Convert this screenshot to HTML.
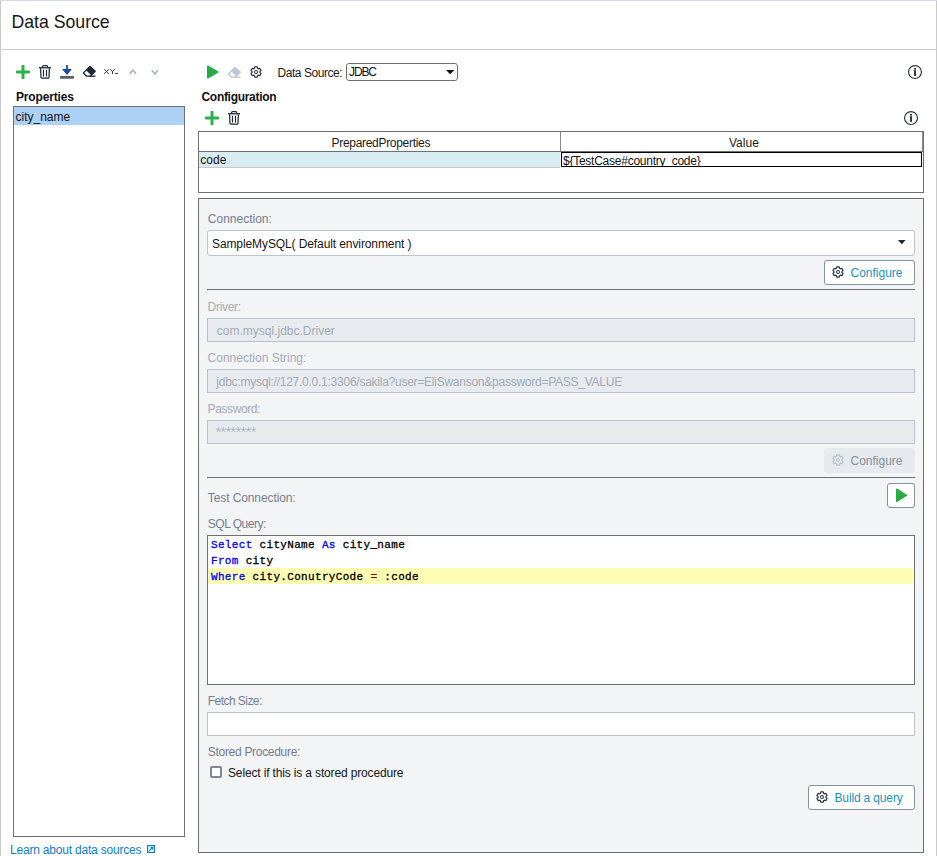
<!DOCTYPE html><html><head><meta charset="utf-8"><style>
html,body{margin:0;padding:0;background:#fff;width:937px;height:856px;overflow:hidden;position:relative}
.t{position:absolute;white-space:pre}
.r{position:absolute;box-sizing:border-box}
</style></head><body>
<div class="r" style="left:0px;top:0px;width:1px;height:856px;background:#c9c9c9"></div>
<div class="r" style="left:936px;top:0px;width:1px;height:856px;background:#c9c9c9"></div>
<div class="r" style="left:0px;top:0px;width:937px;height:1px;background:#d6dce5"></div>
<div class="t" style="left:11.40px;top:13.62px;font-size:17.7px;line-height:17.7px;color:#161616;font-weight:normal;font-family:'Liberation Sans', sans-serif;">Data Source</div>
<div class="r" style="left:1px;top:49px;width:935px;height:1px;background:#cdcdcd"></div>
<svg class="r" style="left:16px;top:65px" width="14" height="14" viewBox="0 0 14 14"><rect x="5.5" y="0" width="3" height="14" rx="0.8" fill="#2bb14b"/><rect x="0" y="5.5" width="14" height="3" rx="0.8" fill="#2bb14b"/></svg>
<svg class="r" style="left:39px;top:65px" width="13" height="14" viewBox="0 0 13 14"><path d="M3.6,2.4 V1.5 Q3.6,0.6 4.5,0.6 H7.7 Q8.6,0.6 8.6,1.5 V2.4" fill="none" stroke="#1f2937" stroke-width="1.2"/><path d="M0,2.75 H12" stroke="#1f2937" stroke-width="1.3"/><path d="M1.6,3.2 L2.0,12.3 Q2.05,13.05 2.8,13.05 H9.2 Q9.95,13.05 10.0,12.3 L10.4,3.2" fill="none" stroke="#1f2937" stroke-width="1.25"/><path d="M4.5,5.1 V10.9 M7.5,5.1 V10.9" stroke="#1f2937" stroke-width="1.15" stroke-linecap="round"/></svg>
<svg class="r" style="left:60px;top:65px" width="14" height="14" viewBox="0 0 14 14"><path d="M6.1,0 H7.9 V4 H11.9 L7,9.9 L2,4 H6.1 Z" fill="#1b4ba1"/><rect x="0" y="11.1" width="14" height="2.6" rx="0.6" fill="#5f5f5f"/></svg>
<svg class="r" style="left:83px;top:66.3px" width="13" height="11" viewBox="0 0 13 11"><path d="M7,0.3 L12.2,5.3 L7.3,10.2 H3.6 L0.3,7 Z" fill="none" stroke="#1e2836" stroke-width="1.3" stroke-linejoin="round"/><path d="M7,0.3 L12.2,5.3 L8.2,9.3 L3.1,4.2 Z" fill="#1e2836"/><path d="M6.5,10.2 H12.5" stroke="#1e2836" stroke-width="1.3"/></svg>
<svg class="r" style="left:103px;top:68px" width="16" height="7" viewBox="0 0 16 7"><path d="M1.3,1.2 L5.8,5.8 M5.8,1.2 L1.3,5.8 M7.2,1.2 L9.5,3.7 L11.8,1.2 M9.5,3.7 V5.9 M12.2,5.4 H15" stroke="#1a1a1a" stroke-width="0.9" fill="none"/></svg>
<svg class="r" style="left:129px;top:69px" width="8" height="6" viewBox="0 0 8 6"><path d="M0.8,4.6 L3.9,1.2 L7,4.6" fill="none" stroke="#aab4c3" stroke-width="1.6"/></svg>
<svg class="r" style="left:151px;top:69px" width="8" height="6" viewBox="0 0 8 6"><path d="M0.8,1.4 L3.9,4.8 L7,1.4" fill="none" stroke="#aab4c3" stroke-width="1.6"/></svg>
<div class="t" style="left:16.00px;top:90.54px;font-size:12px;line-height:12px;color:#111;font-weight:bold;font-family:'Liberation Sans', sans-serif;letter-spacing:-0.15px">Properties</div>
<div class="r" style="left:13px;top:106px;width:172px;height:731px;border:1px solid #6f6f6f;background:#fff"></div>
<div class="r" style="left:14px;top:107px;width:170px;height:18px;background:#add1f5"></div>
<div class="t" style="left:15.50px;top:111.14px;font-size:12px;line-height:12px;color:#141414;font-weight:normal;font-family:'Liberation Sans', sans-serif;">city_name</div>
<div class="t" style="left:10.00px;top:844.14px;font-size:12px;line-height:12px;color:#0d80c6;font-weight:normal;font-family:'Liberation Sans', sans-serif;letter-spacing:-0.2px">Learn about data sources</div>
<svg class="r" style="left:147px;top:845px" width="8" height="8" viewBox="0 0 8 8"><rect x="0.6" y="0.6" width="6.8" height="6.8" fill="none" stroke="#0d80c6" stroke-width="1.2"/><path d="M2.2,5.8 L5.6,2.4 M3.6,2.3 H5.7 V4.4" fill="none" stroke="#0d80c6" stroke-width="1.2"/></svg>
<svg class="r" style="left:205.5px;top:65px" width="13" height="14" viewBox="0 0 13 14"><path d="M1,1.2 Q1,0 2.1,0.6 L12.4,6.4 Q13,7.0 12.4,7.6 L2.1,13.4 Q1,14 1,12.8 Z" fill="#28ab45"/></svg>
<svg class="r" style="left:228px;top:66.5px" width="13" height="11" viewBox="0 0 13 11"><path d="M7,0.3 L12.2,5.3 L7.3,10.2 H3.6 L0.3,7 Z" fill="none" stroke="#bdc6d2" stroke-width="1.3" stroke-linejoin="round"/><path d="M7,0.3 L12.2,5.3 L8.2,9.3 L3.1,4.2 Z" fill="#bdc6d2"/><path d="M6.5,10.2 H12.5" stroke="#bdc6d2" stroke-width="1.3"/></svg>
<svg class="r" style="left:250px;top:66px" width="12" height="12" viewBox="0 0 12 12"><path d="M4.35,2.47 L4.72,0.86 L7.28,0.86 L7.65,2.47 L8.24,2.81 L9.81,2.32 L11.09,4.54 L9.89,5.66 L9.89,6.34 L11.09,7.46 L9.81,9.68 L8.24,9.19 L7.65,9.53 L7.28,11.14 L4.72,11.14 L4.35,9.53 L3.76,9.19 L2.19,9.68 L0.91,7.46 L2.11,6.34 L2.11,5.66 L0.91,4.54 L2.19,2.32 L3.76,2.81Z" fill="none" stroke="#2b3441" stroke-width="1.2" stroke-linejoin="round"/><circle cx="6.0" cy="6.0" r="1.45" fill="none" stroke="#2b3441" stroke-width="1.05"/></svg>
<div class="t" style="left:277.50px;top:66.74px;font-size:12px;line-height:12px;color:#1b1b1b;font-weight:normal;font-family:'Liberation Sans', sans-serif;letter-spacing:-0.45px">Data Source:</div>
<div class="r" style="left:346px;top:63px;width:112px;height:18px;border:1px solid #6f6f6f;border-radius:3px;background:#fff"></div>
<div class="t" style="left:349.00px;top:65.64px;font-size:12px;line-height:12px;color:#111;font-weight:normal;font-family:'Liberation Sans', sans-serif;letter-spacing:-1.1px">JDBC</div>
<svg class="r" style="left:446px;top:70px" width="9" height="5" viewBox="0 0 9 5"><path d="M0,0 H8.4 L4.2,4.3 Z" fill="#111"/></svg>
<svg class="r" style="left:907px;top:64px" width="16" height="16" viewBox="0 0 16 16"><circle cx="8" cy="8" r="6.45" fill="none" stroke="#2c3847" stroke-width="1.15"/><rect x="7" y="4" width="2" height="1.6" fill="#2c3847"/><rect x="7" y="6.2" width="2" height="5.7" fill="#2c3847"/><rect x="6.3" y="6.2" width="0.8" height="0.9" fill="#2c3847" opacity="0.5"/></svg>
<div class="t" style="left:201.50px;top:90.54px;font-size:12px;line-height:12px;color:#111;font-weight:bold;font-family:'Liberation Sans', sans-serif;letter-spacing:-0.3px">Configuration</div>
<svg class="r" style="left:205px;top:111px" width="14" height="14" viewBox="0 0 14 14"><rect x="5.5" y="0" width="3" height="14" rx="0.8" fill="#2bb14b"/><rect x="0" y="5.5" width="14" height="3" rx="0.8" fill="#2bb14b"/></svg>
<svg class="r" style="left:228px;top:111px" width="13" height="14" viewBox="0 0 13 14"><path d="M3.6,2.4 V1.5 Q3.6,0.6 4.5,0.6 H7.7 Q8.6,0.6 8.6,1.5 V2.4" fill="none" stroke="#1f2937" stroke-width="1.2"/><path d="M0,2.75 H12" stroke="#1f2937" stroke-width="1.3"/><path d="M1.6,3.2 L2.0,12.3 Q2.05,13.05 2.8,13.05 H9.2 Q9.95,13.05 10.0,12.3 L10.4,3.2" fill="none" stroke="#1f2937" stroke-width="1.25"/><path d="M4.5,5.1 V10.9 M7.5,5.1 V10.9" stroke="#1f2937" stroke-width="1.15" stroke-linecap="round"/></svg>
<svg class="r" style="left:903px;top:110px" width="16" height="16" viewBox="0 0 16 16"><circle cx="8" cy="8" r="6.45" fill="none" stroke="#2c3847" stroke-width="1.15"/><rect x="7" y="4" width="2" height="1.6" fill="#2c3847"/><rect x="7" y="6.2" width="2" height="5.7" fill="#2c3847"/><rect x="6.3" y="6.2" width="0.8" height="0.9" fill="#2c3847" opacity="0.5"/></svg>
<div class="r" style="left:198px;top:131px;width:726px;height:62px;border:1px solid #6f6f6f;background:#fff"></div>
<div class="r" style="left:199px;top:151px;width:724px;height:1px;background:#6f6f6f"></div>
<div class="r" style="left:560px;top:132px;width:1px;height:19px;background:#8a8a8a"></div>
<div class="r" style="left:922px;top:132px;width:1px;height:19px;background:#8a8a8a"></div>
<div class="t" style="left:331.50px;top:137.34px;font-size:12px;line-height:12px;color:#1b1b1b;font-weight:normal;font-family:'Liberation Sans', sans-serif;letter-spacing:-0.3px">PreparedProperties</div>
<div class="t" style="left:729.00px;top:136.74px;font-size:12px;line-height:12px;color:#1b1b1b;font-weight:normal;font-family:'Liberation Sans', sans-serif;">Value</div>
<div class="r" style="left:199px;top:152px;width:361px;height:15px;background:#d9ecf1"></div>
<div class="r" style="left:199px;top:167px;width:361px;height:1px;background:#c8c8c8"></div>
<div class="t" style="left:200.30px;top:154.04px;font-size:12px;line-height:12px;color:#141414;font-weight:normal;font-family:'Liberation Sans', sans-serif;">code</div>
<div class="r" style="left:561px;top:152px;width:361px;height:15px;border:1.6px solid #000;background:#fff;overflow:hidden"><div class="t" style="left:1px;top:1.5px;font-size:12px;line-height:12px;font-family:'Liberation Sans',sans-serif;color:#111;letter-spacing:-0.25px">${TestCase#country_code}</div></div>
<div class="r" style="left:198px;top:198px;width:726px;height:655px;border:1px solid #6f6f6f;background:#f3f4f6"></div>
<div class="t" style="left:207.80px;top:212.84px;font-size:12px;line-height:12px;color:#737e92;font-weight:normal;font-family:'Liberation Sans', sans-serif;">Connection:</div>
<div class="r" style="left:207px;top:230px;width:708px;height:26px;border:1px solid #bcc4cf;border-radius:3px;background:#fff"></div>
<div class="t" style="left:212.00px;top:237.64px;font-size:12px;line-height:12px;color:#161616;font-weight:normal;font-family:'Liberation Sans', sans-serif;letter-spacing:-0.1px">SampleMySQL( Default environment )</div>
<svg class="r" style="left:898px;top:240px" width="8" height="5" viewBox="0 0 8 5"><path d="M0,0 H7.6 L3.8,4.2 Z" fill="#1f2733"/></svg>
<div class="r" style="left:824px;top:260px;width:91px;height:25px;border:1px solid #8491a3;border-radius:3px;background:#fff"></div>
<svg class="r" style="left:832px;top:266px" width="12" height="12" viewBox="0 0 12 12"><path d="M4.35,2.47 L4.72,0.86 L7.28,0.86 L7.65,2.47 L8.24,2.81 L9.81,2.32 L11.09,4.54 L9.89,5.66 L9.89,6.34 L11.09,7.46 L9.81,9.68 L8.24,9.19 L7.65,9.53 L7.28,11.14 L4.72,11.14 L4.35,9.53 L3.76,9.19 L2.19,9.68 L0.91,7.46 L2.11,6.34 L2.11,5.66 L0.91,4.54 L2.19,2.32 L3.76,2.81Z" fill="none" stroke="#2b3441" stroke-width="1.2" stroke-linejoin="round"/><circle cx="6.0" cy="6.0" r="1.45" fill="none" stroke="#2b3441" stroke-width="1.05"/></svg>
<div class="t" style="left:850.50px;top:266.64px;font-size:12px;line-height:12px;color:#1893be;font-weight:normal;font-family:'Liberation Sans', sans-serif;">Configure</div>
<div class="r" style="left:207px;top:289px;width:708px;height:1px;background:#6f6f6f"></div>
<div class="t" style="left:207.60px;top:300.64px;font-size:12px;line-height:12px;color:#a4abb5;font-weight:normal;font-family:'Liberation Sans', sans-serif;letter-spacing:-0.3px">Driver:</div>
<div class="r" style="left:207px;top:318px;width:708px;height:24px;border:1px solid #b9c1cd;background:#e7eaee"></div>
<div class="t" style="left:216.80px;top:325.44px;font-size:12px;line-height:12px;color:#a4abb5;font-weight:normal;font-family:'Liberation Sans', sans-serif;">com.mysql.jdbc.Driver</div>
<div class="t" style="left:207.60px;top:351.84px;font-size:12px;line-height:12px;color:#a4abb5;font-weight:normal;font-family:'Liberation Sans', sans-serif;">Connection String:</div>
<div class="r" style="left:207px;top:369px;width:708px;height:24px;border:1px solid #b9c1cd;background:#e7eaee"></div>
<div class="t" style="left:216.30px;top:375.84px;font-size:12px;line-height:12px;color:#a4abb5;font-weight:normal;font-family:'Liberation Sans', sans-serif;letter-spacing:-0.25px">jdbc:mysql://127.0.0.1:3306/sakila?user=EliSwanson&amp;password=PASS_VALUE</div>
<div class="t" style="left:207.60px;top:402.64px;font-size:12px;line-height:12px;color:#a4abb5;font-weight:normal;font-family:'Liberation Sans', sans-serif;letter-spacing:-0.4px">Password:</div>
<div class="r" style="left:207px;top:420px;width:708px;height:24px;border:1px solid #b9c1cd;background:#e7eaee"></div>
<svg class="r" style="left:210px;top:422px" width="60" height="14" viewBox="0 0 60 14"><path d="M8.30,7.70 L8.30,5.40 M8.30,7.70 L10.49,6.99 M8.30,7.70 L9.65,9.56 M8.30,7.70 L6.95,9.56 M8.30,7.70 L6.11,6.99 M13.34,7.70 L13.34,5.40 M13.34,7.70 L15.53,6.99 M13.34,7.70 L14.69,9.56 M13.34,7.70 L11.99,9.56 M13.34,7.70 L11.15,6.99 M18.38,7.70 L18.38,5.40 M18.38,7.70 L20.57,6.99 M18.38,7.70 L19.73,9.56 M18.38,7.70 L17.03,9.56 M18.38,7.70 L16.19,6.99 M23.42,7.70 L23.42,5.40 M23.42,7.70 L25.61,6.99 M23.42,7.70 L24.77,9.56 M23.42,7.70 L22.07,9.56 M23.42,7.70 L21.23,6.99 M28.46,7.70 L28.46,5.40 M28.46,7.70 L30.65,6.99 M28.46,7.70 L29.81,9.56 M28.46,7.70 L27.11,9.56 M28.46,7.70 L26.27,6.99 M33.50,7.70 L33.50,5.40 M33.50,7.70 L35.69,6.99 M33.50,7.70 L34.85,9.56 M33.50,7.70 L32.15,9.56 M33.50,7.70 L31.31,6.99 M38.54,7.70 L38.54,5.40 M38.54,7.70 L40.73,6.99 M38.54,7.70 L39.89,9.56 M38.54,7.70 L37.19,9.56 M38.54,7.70 L36.35,6.99 M43.58,7.70 L43.58,5.40 M43.58,7.70 L45.77,6.99 M43.58,7.70 L44.93,9.56 M43.58,7.70 L42.23,9.56 M43.58,7.70 L41.39,6.99 " stroke="#aab1bb" stroke-width="0.8" stroke-linecap="round" fill="none"/></svg>
<div class="r" style="left:824px;top:448px;width:91px;height:25px;border-radius:3px;background:#e6e9ed"></div>
<svg class="r" style="left:832px;top:454px" width="12" height="12" viewBox="0 0 12 12"><path d="M4.35,2.47 L4.72,0.86 L7.28,0.86 L7.65,2.47 L8.24,2.81 L9.81,2.32 L11.09,4.54 L9.89,5.66 L9.89,6.34 L11.09,7.46 L9.81,9.68 L8.24,9.19 L7.65,9.53 L7.28,11.14 L4.72,11.14 L4.35,9.53 L3.76,9.19 L2.19,9.68 L0.91,7.46 L2.11,6.34 L2.11,5.66 L0.91,4.54 L2.19,2.32 L3.76,2.81Z" fill="none" stroke="#b7bfca" stroke-width="1.2" stroke-linejoin="round"/><circle cx="6.0" cy="6.0" r="1.45" fill="none" stroke="#b7bfca" stroke-width="1.05"/></svg>
<div class="t" style="left:850.50px;top:455.04px;font-size:12px;line-height:12px;color:#8590a0;font-weight:normal;font-family:'Liberation Sans', sans-serif;">Configure</div>
<div class="r" style="left:207px;top:477px;width:708px;height:1px;background:#6f6f6f"></div>
<div class="t" style="left:207.80px;top:491.94px;font-size:12px;line-height:12px;color:#737e92;font-weight:normal;font-family:'Liberation Sans', sans-serif;letter-spacing:-0.1px">Test Connection:</div>
<div class="r" style="left:887px;top:483px;width:28px;height:25px;border:1px solid #8491a3;border-radius:3px;background:#fff"></div>
<svg class="r" style="left:895px;top:488px" width="12.5" height="14.5" viewBox="0 0 12.5 14.5"><path d="M1,1.2 Q1,0 2.1,0.6 L11.9,6.65 Q12.5,7.25 11.9,7.85 L2.1,13.9 Q1,14.5 1,13.3 Z" fill="#28ab45"/></svg>
<div class="t" style="left:207.80px;top:517.74px;font-size:12px;line-height:12px;color:#737e92;font-weight:normal;font-family:'Liberation Sans', sans-serif;letter-spacing:-0.5px">SQL Query:</div>
<div class="r" style="left:207px;top:535px;width:708px;height:150px;border:1px solid #6f6f6f;background:#fff"></div>
<div class="r" style="left:208px;top:568px;width:706px;height:16px;background:#ffffb4"></div>
<div class="t" style="left:211.00px;top:540.49px;font-size:11px;line-height:11px;color:#000;font-weight:normal;font-family:'Liberation Mono', monospace;letter-spacing:0.33px;-webkit-text-stroke:0.3px currentColor"><span style="color:#0000ff">Select</span> cityName <span style="color:#0000ff">As</span> city_name</div>
<div class="t" style="left:211.00px;top:556.49px;font-size:11px;line-height:11px;color:#000;font-weight:normal;font-family:'Liberation Mono', monospace;letter-spacing:0.33px;-webkit-text-stroke:0.3px currentColor"><span style="color:#0000ff">From</span> city</div>
<div class="t" style="left:211.00px;top:572.19px;font-size:11px;line-height:11px;color:#000;font-weight:normal;font-family:'Liberation Mono', monospace;letter-spacing:0.33px;-webkit-text-stroke:0.3px currentColor"><span style="color:#0000ff">Where</span> city.ConutryCode <span style="color:#800000">=</span> :code</div>
<div class="t" style="left:207.80px;top:694.84px;font-size:12px;line-height:12px;color:#737e92;font-weight:normal;font-family:'Liberation Sans', sans-serif;letter-spacing:-0.55px">Fetch Size:</div>
<div class="r" style="left:207px;top:712px;width:708px;height:24px;border:1px solid #bac4d0;background:#fff"></div>
<div class="t" style="left:207.80px;top:745.84px;font-size:12px;line-height:12px;color:#737e92;font-weight:normal;font-family:'Liberation Sans', sans-serif;letter-spacing:-0.3px">Stored Procedure:</div>
<div class="r" style="left:210px;top:766px;width:12px;height:12px;border:2px solid #7d8898;border-radius:2px;background:#fff"></div>
<div class="t" style="left:228.00px;top:767.24px;font-size:12px;line-height:12px;color:#161616;font-weight:normal;font-family:'Liberation Sans', sans-serif;letter-spacing:-0.15px">Select if this is a stored procedure</div>
<div class="r" style="left:808px;top:785px;width:107px;height:25px;border:1px solid #8491a3;border-radius:3px;background:#fff"></div>
<svg class="r" style="left:816px;top:791px" width="12" height="12" viewBox="0 0 12 12"><path d="M4.35,2.47 L4.72,0.86 L7.28,0.86 L7.65,2.47 L8.24,2.81 L9.81,2.32 L11.09,4.54 L9.89,5.66 L9.89,6.34 L11.09,7.46 L9.81,9.68 L8.24,9.19 L7.65,9.53 L7.28,11.14 L4.72,11.14 L4.35,9.53 L3.76,9.19 L2.19,9.68 L0.91,7.46 L2.11,6.34 L2.11,5.66 L0.91,4.54 L2.19,2.32 L3.76,2.81Z" fill="none" stroke="#2b3441" stroke-width="1.2" stroke-linejoin="round"/><circle cx="6.0" cy="6.0" r="1.45" fill="none" stroke="#2b3441" stroke-width="1.05"/></svg>
<div class="t" style="left:834.50px;top:791.74px;font-size:12px;line-height:12px;color:#1893be;font-weight:normal;font-family:'Liberation Sans', sans-serif;letter-spacing:-0.15px">Build a query</div>
</body></html>
